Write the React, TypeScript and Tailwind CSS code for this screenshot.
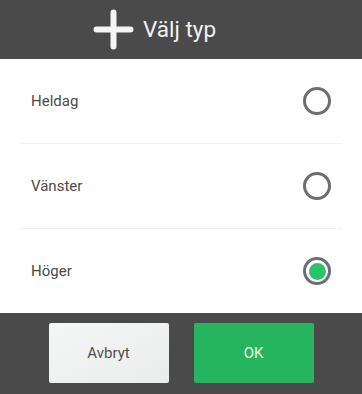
import { useState } from "react";

type Option = {
  id: string;
  label: string;
};

const options: Option[] = [
  { id: "heldag", label: "Heldag" },
  { id: "vanster", label: "Vänster" },
  { id: "hoger", label: "Höger" },
];

function PlusIcon() {
  return (
    <svg width="41" height="41" viewBox="0 0 41 41" className="shrink-0">
      <path
        d="M20.5 3.5 V37.5 M3.5 20.5 H37.5"
        stroke="#f4f4f4"
        strokeWidth="6"
        strokeLinecap="round"
        fill="none"
      />
    </svg>
  );
}

function Radio({ checked }: { checked: boolean }) {
  return (
    <span className="flex h-[28px] w-[28px] items-center justify-center rounded-full border-[3px] border-[#6e6e6e]">
      {checked && <span className="h-[17px] w-[17px] rounded-full bg-[#2ac36b]" />}
    </span>
  );
}

export default function App() {
  const [selected, setSelected] = useState("hoger");

  return (
    <div
      className="flex h-[394px] w-[362px] flex-col bg-white"
      style={{ fontFamily: "Roboto, 'Liberation Sans', sans-serif" }}
    >
      <div className="flex h-[59px] shrink-0 items-center gap-[9px] bg-[#4a4a4a] pl-[93px]">
        <PlusIcon />
        <span className="text-[22.5px] leading-none text-[#f2f2f2]">Välj typ</span>
      </div>

      <div className="mx-5 flex flex-1 flex-col divide-y divide-[#f1f1f1]">
        {options.map((option, index) => (
          <button
            key={option.id}
            type="button"
            onClick={() => setSelected(option.id)}
            className={`flex items-center justify-between px-[11px] text-left ${
              index === 2 ? "h-[84px]" : "h-[85px]"
            }`}
          >
            <span className="text-[15px] text-[#4b4b4b]">{option.label}</span>
            <Radio checked={selected === option.id} />
          </button>
        ))}
      </div>

      <div className="flex h-[81px] shrink-0 items-start justify-center gap-[25px] bg-[#4a4a4a] pt-[10px]">
        <button
          type="button"
          className="h-[60px] w-[120px] rounded-[2px] bg-gradient-to-br from-[#f5f6f6] to-[#eaecec] text-[15px] text-[#505050]"
        >
          Avbryt
        </button>
        <button
          type="button"
          className="h-[60px] w-[120px] rounded-[2px] bg-[#27b45f] text-[15px] text-[#eaf7ee]"
        >
          OK
        </button>
      </div>
    </div>
  );
}
